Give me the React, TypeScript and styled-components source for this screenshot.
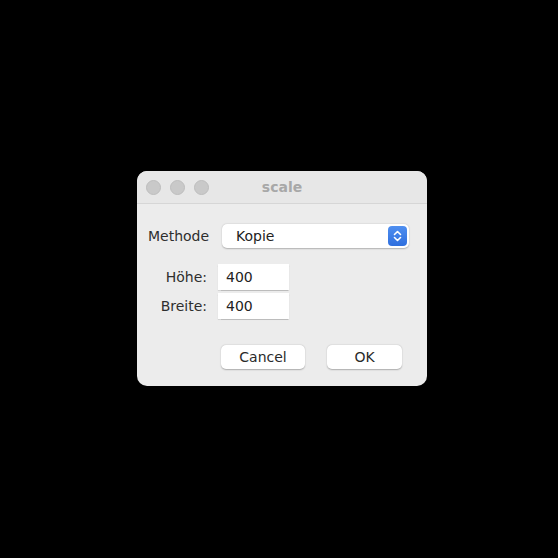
import React from "react";
import styled, { createGlobalStyle } from "styled-components";

const Global = createGlobalStyle`
  html, body { margin: 0; padding: 0; background: #000; }
  body { width: 558px; height: 558px; overflow: hidden; }
`;

const Desktop = styled.div`
  width: 558px;
  height: 558px;
  box-sizing: border-box;
  padding: 171px 0 0 137px;
  font-family: "DejaVu Sans", "Liberation Sans", sans-serif;
`;

const Window = styled.div`
  width: 290px;
  height: 215px;
  border-radius: 10px;
  overflow: hidden;
  background: #ececec;
  display: flex;
  flex-direction: column;
`;

const TitleBar = styled.div`
  height: 32px;
  background: #e7e7e7;
  border-bottom: 1px solid #d6d6d6;
  position: relative;
  display: flex;
  align-items: center;
  padding-left: 9px;
  gap: 9px;
`;

const Light = styled.span`
  width: 15px;
  height: 15px;
  border-radius: 50%;
  background: #c9c9c9;
  border: 0.5px solid #bdbdbd;
  box-sizing: border-box;
`;

const Title = styled.div`
  position: absolute;
  left: 0;
  right: 0;
  top: 0;
  bottom: 0;
  display: flex;
  align-items: center;
  justify-content: center;
  font-weight: bold;
  font-size: 14px;
  color: #a8a8a8;
  pointer-events: none;
`;

const Content = styled.div`
  flex: 1;
  display: flex;
  flex-direction: column;
  padding: 20px 0 0 11px;
`;

const MethodRow = styled.div`
  display: flex;
  align-items: center;
  height: 24px;
`;

const Label = styled.span`
  font-size: 14px;
  color: #2e2e2e;
`;

const MethodLabel = styled(Label)`
  width: 74px;
`;

const Select = styled.div`
  width: 187px;
  height: 24px;
  background: #fff;
  border-radius: 5px;
  box-shadow: 0 0.5px 1.5px rgba(0, 0, 0, 0.25);
  display: flex;
  align-items: center;
  justify-content: space-between;
  padding: 0 2px 0 14px;
  box-sizing: border-box;
  font-size: 14px;
  color: #222;
`;

const Stepper = styled.div`
  width: 19px;
  height: 20px;
  border-radius: 4px;
  background: linear-gradient(#4f8ff0, #2f6fde);
  display: flex;
  align-items: center;
  justify-content: center;
`;

const FieldGrid = styled.div`
  display: grid;
  grid-template-columns: 59px 71px;
  column-gap: 11px;
  row-gap: 3px;
  margin-top: 16px;
  align-items: center;
`;

const FieldLabel = styled(Label)`
  text-align: right;
`;

const Field = styled.div`
  height: 26px;
  background: #fff;
  box-shadow: 0 0.5px 1px rgba(0, 0, 0, 0.2);
  display: flex;
  align-items: center;
  padding-left: 8px;
  font-size: 14px;
  color: #222;
`;

const ButtonRow = styled.div`
  display: flex;
  justify-content: flex-end;
  gap: 22px;
  padding-right: 25px;
  margin-top: 26px;
`;

const Button = styled.div<{ $w: number }>`
  width: ${(p) => p.$w}px;
  height: 24px;
  background: #fff;
  border-radius: 5px;
  box-shadow: 0 0.5px 1.5px rgba(0, 0, 0, 0.28);
  display: flex;
  align-items: center;
  justify-content: center;
  font-size: 14px;
  color: #2a2a2a;
`;

export default function App() {
  return (
    <>
      <Global />
      <Desktop>
        <Window>
          <TitleBar>
            <Light />
            <Light />
            <Light />
            <Title>scale</Title>
          </TitleBar>
          <Content>
            <MethodRow>
              <MethodLabel>Methode</MethodLabel>
              <Select>
                <span>Kopie</span>
                <Stepper>
                  <svg width="11" height="14" viewBox="0 0 11 14" fill="none" stroke="#fff" strokeWidth="1.6" strokeLinecap="round" strokeLinejoin="round">
                    <path d="M2.5 5.5 L5.5 2.5 L8.5 5.5" />
                    <path d="M2.5 8.5 L5.5 11.5 L8.5 8.5" />
                  </svg>
                </Stepper>
              </Select>
            </MethodRow>
            <FieldGrid>
              <FieldLabel>Höhe:</FieldLabel>
              <Field>400</Field>
              <FieldLabel>Breite:</FieldLabel>
              <Field>400</Field>
            </FieldGrid>
            <ButtonRow>
              <Button $w={84}>Cancel</Button>
              <Button $w={75}>OK</Button>
            </ButtonRow>
          </Content>
        </Window>
      </Desktop>
    </>
  );
}
